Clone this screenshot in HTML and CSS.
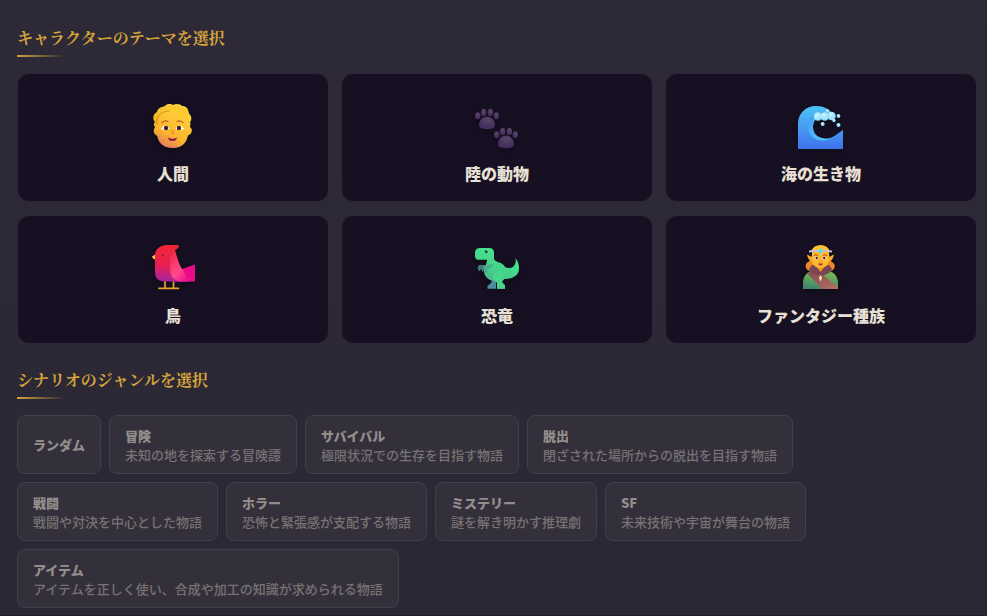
FILE: index.html
```html
<!DOCTYPE html>
<html lang="ja">
<head>
    <meta charset="UTF-8">
    <meta name="viewport" content="width=device-width, initial-scale=1">
    <title>キャラクターのテーマを選択</title>
    <link rel="stylesheet" href="styles.css">
</head>
<body>
    <main class="panel">
        <section>
            <h2 class="section-title">キャラクターのテーマを選択</h2>
            <div class="theme-grid">
                <button type="button" class="theme-card">
                    <svg class="theme-icon" viewBox="0 0 48 48" aria-hidden="true">
                        <defs>
                            <linearGradient id="skin" x1="0.8" y1="0" x2="0.3" y2="1">
                                <stop offset="0" stop-color="#ffd33d"/>
                                <stop offset="0.65" stop-color="#fdb52c"/>
                                <stop offset="1" stop-color="#e17a62"/>
                            </linearGradient>
                            <linearGradient id="hair" x1="1" y1="0" x2="0" y2="1">
                                <stop offset="0" stop-color="#ffe03e"/>
                                <stop offset="1" stop-color="#eda321"/>
                            </linearGradient>
                        </defs>
                        <path d="M8 10C9 5 14 5 16 4C18 1 23 2 24 3C27 1 32 2 33 4C38 4 40 8 39 11C43 13 43 18 41 20C42 22 41 24 41 25C44 27 43 32 40 33L38 34L9 34C4 33 4 28 6 25C4 23 5 21 6 20C3 17 4 12 8 10Z" fill="url(#hair)"/>
                        <path d="M9 22C9 14 14 9 22 9C25 13 31 15 38 15C39 17 39 20 39 24C42 25 42 31 39 31C39 40 33 46 24 46C14 46 8 40 8 31C5 30 5 25 8 24Z" fill="url(#skin)"/>
                        <path d="M20 8C23 7 25 9 26 11C28 15 34 17 39 14C42 11 38 6 33 5C27 2 22 4 20 8Z" fill="#fbca2e"/>
                        <path d="M8 22C7 14 12 9 21 9" fill="none" stroke="#c98a1b" stroke-width=".7"/>
                        <path d="M13 20.500Q16 18 19 19.500M28 19.500Q31 18 34 20.500" fill="none" stroke="#b85b22" stroke-width="1.200" stroke-linecap="round"/>
                        <path d="M12 27Q16 20.500 20.500 26.500Q16.500 29.500 12 27Z" fill="#fff"/>
                        <path d="M26.500 26.500Q31 20.500 35 27Q30.500 29.500 26.500 26.500Z" fill="#fff"/>
                        <circle cx="17" cy="26" r="2.200" fill="#3c2224"/>
                        <circle cx="30" cy="26" r="2.200" fill="#3c2224"/>
                        <path d="M23 28Q20.500 33 23.500 32.500Q26 33 24.500 28Z" fill="#f6962d"/>
                        <path d="M19 35.500Q23.500 38 28 35.500Q27.500 39 23.500 39Q19.500 39 19 35.500Z" fill="#8e1351"/>
                    </svg>
                    <span class="theme-name">人間</span>
                </button>
                <button type="button" class="theme-card">
                    <svg class="theme-icon" viewBox="0 0 48 48" aria-hidden="true">
                        <defs>
                            <radialGradient id="pad" cx="0.55" cy="0.3" r="0.8">
                                <stop offset="0" stop-color="#5b4668"/>
                                <stop offset="0.6" stop-color="#48325d"/>
                                <stop offset="1" stop-color="#4a2a69"/>
                            </radialGradient>
                            <g id="paw" fill="url(#pad)">
                                <path d="M14 14.500C9 14.500 6 19 6 23C6 26 9 27 14 27C19 27 22 26 22 23C22 19 19 14.500 14 14.500Z"/>
                                <ellipse cx="4.700" cy="13.700" rx="2.700" ry="3.400"/>
                                <ellipse cx="10.600" cy="10.400" rx="2.700" ry="3.600"/>
                                <ellipse cx="17.400" cy="10.400" rx="2.700" ry="3.600"/>
                                <ellipse cx="23.300" cy="13.700" rx="2.700" ry="3.400"/>
                            </g>
                        </defs>
                        <use href="#paw"/>
                        <use href="#paw" x="19" y="19"/>
                    </svg>
                    <span class="theme-name">陸の動物</span>
                </button>
                <button type="button" class="theme-card">
                    <svg class="theme-icon" viewBox="0 0 48 48" aria-hidden="true">
                        <defs>
                            <linearGradient id="sea" x1="0" y1="0" x2="0" y2="1">
                                <stop offset="0" stop-color="#4dc5f8"/>
                                <stop offset="0.55" stop-color="#4796f2"/>
                                <stop offset="1" stop-color="#3f72ec"/>
                            </linearGradient>
                            <linearGradient id="curl" x1="0" y1="0" x2="1" y2="1">
                                <stop offset="0" stop-color="#3f9bee"/>
                                <stop offset="1" stop-color="#5bd2ff"/>
                            </linearGradient>
                            <radialGradient id="foam" cx="0.4" cy="0.35" r="0.8">
                                <stop offset="0" stop-color="#c9f5ff"/>
                                <stop offset="1" stop-color="#78d4f8"/>
                            </radialGradient>
                        </defs>
                        <path d="M1 47V22C1 11 9 4 19 4C27 4 32 7 36 12L33 16C23 10 16 18 16 25C16 33 21 37 28 37C35 37 40 32 46 28V47Z" fill="url(#sea)"/>
                        <path d="M24 12C14 11 10 18 11 26C12 35 19 39 27 38.500C32 38 35 36 38 34C35 36 31 37 28 36.500C20 36 16 31 16 25C16 20 18 15 24 12Z" fill="url(#curl)"/>
                        <g fill="url(#foam)">
                            <circle cx="21" cy="14.500" r="4.300"/>
                            <circle cx="34.500" cy="14" r="4.300"/>
                            <circle cx="27.700" cy="14.500" r="4.300"/>
                            <circle cx="30.500" cy="8.700" r="1.700"/>
                            <circle cx="37" cy="18.500" r="1.700"/>
                            <circle cx="41.500" cy="14" r="1.900"/>
                            <circle cx="25.700" cy="22" r="2"/>
                            <circle cx="41.500" cy="23" r="2"/>
                        </g>
                    </svg>
                    <span class="theme-name">海の生き物</span>
                </button>
                <button type="button" class="theme-card">
                    <svg class="theme-icon" viewBox="0 0 48 48" aria-hidden="true">
                        <defs>
                            <linearGradient id="feather" x1="0.5" y1="0" x2="0.4" y2="1">
                                <stop offset="0" stop-color="#f12534"/>
                                <stop offset="0.6" stop-color="#e92056"/>
                                <stop offset="1" stop-color="#a524a0"/>
                            </linearGradient>
                            <linearGradient id="wing" x1="0" y1="0" x2="0.7" y2="1">
                                <stop offset="0" stop-color="#ed2442"/>
                                <stop offset="0.65" stop-color="#ff4b8d"/>
                                <stop offset="1" stop-color="#ee168d"/>
                            </linearGradient>
                        </defs>
                        <path d="M16 36V44M24.500 36V44M10 44.300H20M20.500 44.300H29.500" fill="none" stroke="#e5a02d" stroke-width="1.700" stroke-linecap="round"/>
                        <path d="M7 10L3 12.500L4 14.500L7 16Z" fill="#ffc642"/>
                        <path d="M30 26L46 20.500V37.500H24Z" fill="#e90c88"/>
                        <path d="M18 1H29Q31 3 28 5L26 6C28 13 30 20 33 26L37 37.500H16C9 37.500 6 34 6 28V12C6 5 11 1 18 1Z" fill="url(#feather)"/>
                        <path d="M26 7C28 15 30 22 34 26L40 37.500H30C24 36 21 31 21 25V14Q22 9 26 7Z" fill="url(#wing)"/>
                        <circle cx="14" cy="11.500" r="1" fill="#712039"/>
                    </svg>
                    <span class="theme-name">鳥</span>
                </button>
                <button type="button" class="theme-card">
                    <svg class="theme-icon" viewBox="0 0 48 48" aria-hidden="true">
                        <defs>
                            <linearGradient id="dino" x1="0.7" y1="0.2" x2="0.3" y2="1">
                                <stop offset="0" stop-color="#43e58c"/>
                                <stop offset="0.6" stop-color="#48c88a"/>
                                <stop offset="1" stop-color="#5a91ac"/>
                            </linearGradient>
                        </defs>
                        <path d="M12 21L6 21L4.500 24L6 27.500L8 25L9.500 28L12 25Z" fill="#407e77"/>
                        <path d="M13 31L19 36L18 39L14.500 42V44.700H23V37Z" fill="#4d8b9d"/>
                        <path d="M7 4H16Q21 4 21 9V14C21 19 29 17 32 23C38 26 44 22 42.500 14Q48 22 45 29C42 34 36 35 31 35L29 38L32 41V44.700H24V39L22 37C17 37 12 34 11 28C11 23 14 20 14 16H5Q2 15 2 12V9Q2 4 7 4Z" fill="url(#dino)"/>
                        <path d="M13 21L20 20L18 24L14 25L16 30L12 28L10 23Z" fill="#4bac89"/>
                        <path d="M21 36C18 31 22 27 27 27C32 28 34 33 30 36L28 38L32 42V44.700H24V38Z" fill="#47d58a"/>
                        <path d="M4 15.500H14" stroke="#31a575" stroke-width="1"/>
                        <ellipse cx="13.300" cy="7.500" rx="1.500" ry="1.800" fill="#25483c"/>
                        <circle cx="14" cy="6.600" r=".5" fill="#fff"/>
                    </svg>
                    <span class="theme-name">恐竜</span>
                </button>
                <button type="button" class="theme-card">
                    <svg class="theme-icon" viewBox="0 0 48 48" aria-hidden="true">
                        <defs>
                            <linearGradient id="tunic" x1="0.6" y1="0" x2="0.4" y2="1">
                                <stop offset="0" stop-color="#80bd4c"/>
                                <stop offset="1" stop-color="#42866f"/>
                            </linearGradient>
                            <linearGradient id="sash" x1="0" y1="0" x2="1" y2="1">
                                <stop offset="0" stop-color="#804a52"/>
                                <stop offset="1" stop-color="#b07065"/>
                            </linearGradient>
                        </defs>
                        <path d="M15 10C14 15 14 17 11 18C7 20 8 27 14 27H33C39 26 39 20 35 18C33 17 33 15 32 10Z" fill="#ed872c"/>
                        <path d="M6 45V39C6 31 11 27 18 26H29C36 27 41 32 41 39V45Z" fill="url(#tunic)"/>
                        <path d="M10 29L17 27L26 31L41 43V45H25Z" fill="url(#sash)"/>
                        <path d="M15 21L32 21L35 25C33 30 27 32 23.500 31C19 32 13 29 12 25Z" fill="#7b4554"/>
                        <path d="M18 21H29L23.500 28Z" fill="#e69226"/>
                        <path d="M15 13L10 10.500Q11 17 16 18M32 13L37 10.500Q36 17 31 18" fill="#f7ab2c"/>
                        <path d="M15 7H32V16C32 21 28 24 23.500 24C19 24 15 21 15 16Z" fill="#feb82e"/>
                        <path d="M14 7C16 3 19 1 23.500 1C28 1 31 3 33 7Z" fill="#fbc32f"/>
                        <path d="M12 7.500Q23.500 6 35 7.500" fill="none" stroke="#c4bfd6" stroke-width="1.900"/>
                        <path d="M23.500 3.500L25.500 7L23.500 10.500L21.500 7Z" fill="#4ce1ef"/>
                        <path d="M17 11.500Q19 10 21 11.500M26 11.500Q28 10 30 11.500" fill="none" stroke="#a25126" stroke-width="1"/>
                        <ellipse cx="19.500" cy="14" rx="2" ry="1.500" fill="#fff"/>
                        <ellipse cx="27.500" cy="14" rx="2" ry="1.500" fill="#fff"/>
                        <circle cx="19.700" cy="14" r="1.200" fill="#422626"/>
                        <circle cx="27.300" cy="14" r="1.200" fill="#422626"/>
                        <path d="M23 15L22.500 17.500H25" fill="none" stroke="#f09a2b" stroke-width="1"/>
                        <path d="M21 19.500H26Q25.500 21.500 23.500 21.500Q21.500 21.500 21 19.500Z" fill="#a32a2e"/>
                        <path d="M23.500 31L25 34L23.500 37.500L22 34Z" fill="#fff0a6"/>
                    </svg>
                    <span class="theme-name">ファンタジー種族</span>
                </button>
            </div>
        </section>

        <section>
            <h2 class="section-title">シナリオのジャンルを選択</h2>
            <div class="genre-list">
                <button type="button" class="genre"><strong>ランダム</strong></button>
                <button type="button" class="genre"><strong>冒険</strong><span>未知の地を探索する冒険譚</span></button>
                <button type="button" class="genre"><strong>サバイバル</strong><span>極限状況での生存を目指す物語</span></button>
                <button type="button" class="genre"><strong>脱出</strong><span>閉ざされた場所からの脱出を目指す物語</span></button>
                <button type="button" class="genre"><strong>戦闘</strong><span>戦闘や対決を中心とした物語</span></button>
                <button type="button" class="genre"><strong>ホラー</strong><span>恐怖と緊張感が支配する物語</span></button>
                <button type="button" class="genre"><strong>ミステリー</strong><span>謎を解き明かす推理劇</span></button>
                <button type="button" class="genre"><strong>SF</strong><span>未来技術や宇宙が舞台の物語</span></button>
                <button type="button" class="genre"><strong>アイテム</strong><span>アイテムを正しく使い、合成や加工の知識が求められる物語</span></button>
            </div>
        </section>
    </main>
</body>
</html>
```
FILE: styles.css
```css
* {
    box-sizing: border-box;
}

body {
    margin: 0;
    background-color: #211c2b;
    font-family: "Noto Sans CJK JP", sans-serif;
    color: #e8e0d5;
}

.panel {
    display: flex;
    flex-direction: column;
    gap: 24px;
    padding: 26px 9px 7px 17px;
    border-right: 1px solid #27222f;
    border-bottom: 1px solid #211c2b;
    background: linear-gradient(#2e2936, #2b2734);
}

.section-title {
    position: relative;
    margin: 0 0 16px;
    padding-bottom: 7px;
    font-family: "Noto Serif CJK JP", "Noto Serif JP", "Noto Sans CJK JP", serif;
    font-size: 16px;
    font-weight: 700;
    line-height: 24px;
    color: #d4a43b;
}

.section-title::after {
    content: "";
    position: absolute;
    left: 0;
    bottom: 0;
    width: 48px;
    height: 2px;
    background: linear-gradient(90deg, #d4a43b, transparent);
}

button {
    font-family: inherit;
    color: inherit;
    cursor: pointer;
}

.theme-grid {
    display: grid;
    grid-template-columns: repeat(3, 1fr);
    gap: 13px 12px;
}

.theme-card {
    display: flex;
    flex-direction: column;
    align-items: center;
    gap: 11px;
    padding: 28px 16px 16px;
    border: 1px solid #2d2837;
    border-radius: 12px;
    background-color: #161022;
}

.theme-icon {
    width: 48px;
    height: 48px;
    filter: drop-shadow(0 2px 4px rgba(0, 0, 0, 0.3));
}

.theme-name {
    font-size: 16px;
    font-weight: 900;
    line-height: 24px;
}

.genre-list {
    display: flex;
    flex-wrap: wrap;
    gap: 8px;
}

.genre {
    display: flex;
    flex-direction: column;
    align-items: flex-start;
    justify-content: center;
    min-height: 59px;
    padding: 9px 15px;
    border: 1px solid #433e4c;
    border-radius: 8px;
    background-color: #34303b;
    font-size: 13px;
    line-height: 19px;
    text-align: left;
}

.genre strong {
    font-weight: 900;
    color: #938d8b;
}

.genre span {
    font-weight: 500;
    color: #777274;
}
```
